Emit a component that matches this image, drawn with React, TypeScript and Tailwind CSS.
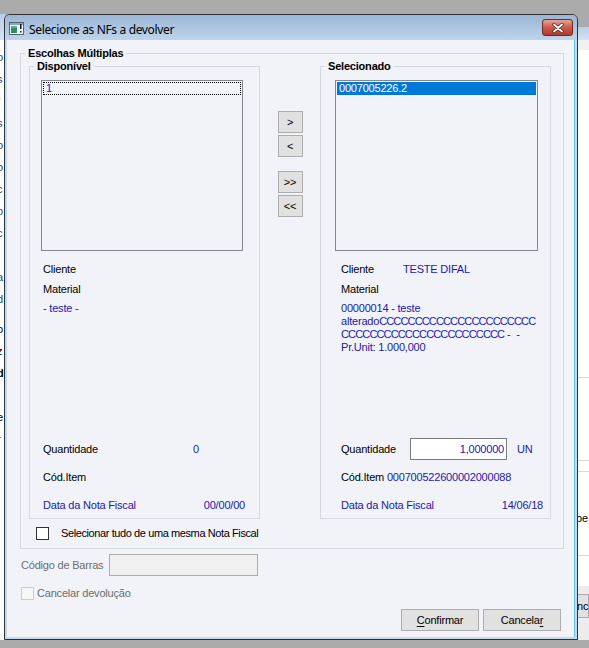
import React from 'react'

const leftGlyphs = ['o', 's', 'f', 's', 'o', 'o', 'c', 'o', 'c', 'l', 'a', 'd']
const leftGlyphs2 = ['o', 'z', 'd', '', 'e', 'r']

function WinIcon() {
  return (
    <svg width="15" height="13" viewBox="0 0 15 13">
      <rect x="0.5" y="0.5" width="14" height="12" fill="#f4f6f8" stroke="#5a6470" />
      <rect x="1" y="1" width="13" height="2" fill="#8aa6c6" />
      <rect x="2" y="4" width="6" height="7" fill="#2f8a6c" />
      <rect x="2" y="4" width="6" height="2" fill="#5fb08f" />
      <rect x="11" y="2" width="1.5" height="5" fill="#111" />
      <rect x="11" y="9" width="1.5" height="1.5" fill="#111" />
    </svg>
  )
}

function CloseButton() {
  return (
    <div className="flex h-[17px] w-[31px] items-center justify-center rounded-[3px] border border-[#6e2b22] bg-linear-to-b from-[#e6a596] via-[#cc5a4b] to-[#b2392b]">
      <svg width="12" height="10" viewBox="0 0 12 10">
        <path d="M2 1.5 L10 8.5 M10 1.5 L2 8.5" stroke="#4b2a26" strokeWidth="3.4" strokeLinecap="round" />
        <path d="M2 1.5 L10 8.5 M10 1.5 L2 8.5" stroke="#ffffff" strokeWidth="1.8" strokeLinecap="round" />
      </svg>
    </div>
  )
}

function MoveButton({ label }: { label: string }) {
  return (
    <button className="flex h-[22px] w-[25px] items-center justify-center border border-[#adadad] bg-[#e1e1e1] text-[11px] leading-none text-black">
      {label}
    </button>
  )
}

export default function App() {
  return (
    <div className="relative h-[648px] w-[589px] overflow-hidden bg-[#ababab] font-['Liberation_Sans',Arial,sans-serif] text-[11px] leading-[13px] tracking-[-0.2px] text-black">
      {/* janela da aplicação por trás, à esquerda */}
      <div className="absolute left-0 top-[14px] h-[626px] w-[5px] overflow-hidden bg-white">
        <div className="h-[26px] bg-linear-to-b from-[#b9cfe8] to-[#d3e2f2]" />
        <div className="-ml-[3px] flex flex-col pt-[6px] leading-[22px] text-[#1f3f8f]">
          {leftGlyphs.map((g, i) => (
            <span key={i}>{g}</span>
          ))}
        </div>
        <div className="-ml-[3px] mt-[8px] flex flex-col leading-[22px] text-black">
          {leftGlyphs2.map((g, i) => (
            <span key={i} className={g === 'd' ? 'font-bold' : ''}>
              {g || '\u00a0'}
            </span>
          ))}
        </div>
      </div>

      {/* janela da aplicação por trás, à direita */}
      <div className="absolute left-[578px] top-[27px] flex h-[613px] w-[11px] flex-col overflow-hidden bg-white">
        <div className="h-[13px] bg-linear-to-b from-[#b9cfe8] to-[#d3e2f2]" />
        <div className="h-[10px] bg-[#f0f0f0]" />
        <div className="h-[328px] border-b border-[#d9d9d9]" />
        <div className="h-[83px] border-b border-[#d9d9d9]" />
        <div className="h-[11px] border-b border-[#d9d9d9]" />
        <div className="h-[38px]" />
        <div className="-ml-[2px] h-[16px] leading-[16px]">pe</div>
        <div className="h-[30px] border-b border-[#d9d9d9]" />
        <div className="h-[30px]" />
        <div className="flex flex-1 flex-col bg-[#ececec] pt-[8px]">
          <div className="-ml-[6px] h-[24px] border border-[#adadad] bg-[#e1e1e1] pl-[4px] leading-[22px]">nc</div>
        </div>
      </div>

      {/* diálogo */}
      <div className="absolute left-[4px] top-[14px] flex h-[626px] w-[574px] flex-col rounded-t-[6px] border border-[#2f3338] bg-[#c5d9ee]">
        <div className="flex h-[25px] items-start rounded-t-[5px] bg-linear-to-b from-[#9bb6d6] to-[#bfd4eb] pl-[4px] pr-[4px]">
          <div className="mt-[7px] flex items-center">
            <WinIcon />
          </div>
          <span className="ml-[5px] mt-[7px] font-['Noto_Sans',sans-serif] text-[12px] leading-[16px] tracking-[-0.35px] text-black">
            Selecione as NFs a devolver
          </span>
          <div className="ml-auto mt-[4px]">
            <CloseButton />
          </div>
        </div>

        <div className="flex flex-1 px-[2px] pb-[2px]">
          <div className="flex flex-1 flex-col border-r border-[#5ec3ea] bg-[#f1f3f8] pt-[7px]">
            <fieldset className="ml-[13px] w-[544px] border border-[#d5d9df]">
              <legend className="ml-[4px] px-[3px] font-bold leading-[13px]">Escolhas Múltiplas</legend>
              <div className="flex pl-[8px]">
                {/* Disponível */}
                <fieldset className="w-[231px] border border-[#d5d9df]">
                  <legend className="ml-[4px] px-[3px] font-bold leading-[13px]">Disponível</legend>
                  <div className="flex h-[445px] flex-col pl-[11px]">
                    <div className="mt-[7px] h-[171px] w-[202px] border border-[#828790] bg-[#f1f3f8] p-[1px]">
                      <div className="h-[13px] border border-dotted border-black pl-[2px] leading-[11px] text-[#2020b0]">1</div>
                    </div>
                    <div className="flex flex-col pl-[2px]">
                      <div className="mt-[8px] flex h-[20px] items-center">Cliente</div>
                      <div className="flex h-[20px] items-center">Material</div>
                      <div className="pt-[3px] leading-[13px] text-[#2020b0]">- teste -</div>
                    </div>
                    <div className="mt-auto flex flex-col gap-[6px] pb-[2px] pl-[2px]">
                      <div className="flex h-[22px] items-center">
                        <span className="w-[150px]">Quantidade</span>
                        <span className="text-[#2020b0]">0</span>
                      </div>
                      <div className="flex h-[22px] items-center">Cód.Item</div>
                      <div className="flex h-[22px] w-[202px] items-center justify-between text-[#2020b0]">
                        <span>Data da Nota Fiscal</span>
                        <span>00/00/00</span>
                      </div>
                    </div>
                  </div>
                </fieldset>

                {/* botões de transferência */}
                <div className="flex w-[60px] flex-col items-center pt-[51px]">
                  <div className="flex flex-col gap-[2px]">
                    <MoveButton label=">" />
                    <MoveButton label="<" />
                  </div>
                  <div className="mt-[14px] flex flex-col gap-[2px]">
                    <MoveButton label=">>" />
                    <MoveButton label="<<" />
                  </div>
                </div>

                {/* Selecionado */}
                <fieldset className="w-[231px] border border-[#d5d9df]">
                  <legend className="ml-[4px] px-[3px] font-bold leading-[13px]">Selecionado</legend>
                  <div className="flex h-[445px] flex-col pl-[14px]">
                    <div className="mt-[7px] h-[171px] w-[203px] border border-[#828790] bg-[#f1f3f8] p-[1px]">
                      <div className="h-[13px] bg-[#0078d7] pl-[2px] leading-[13px] text-white">0007005226.2</div>
                    </div>
                    <div className="flex flex-col pl-[6px]">
                      <div className="mt-[8px] flex h-[20px] items-center">
                        <span className="w-[62px]">Cliente</span>
                        <span className="text-[#2020b0]">TESTE DIFAL</span>
                      </div>
                      <div className="flex h-[20px] items-center">Material</div>
                      <div className="whitespace-nowrap pt-[3px] leading-[13px] text-[#2020b0]">
                        00000014 - teste
                        <br />
                        alterado<span className="tracking-[-0.85px]">CCCCCCCCCCCCCCCCCCCCCC</span>
                        <br />
                        <span className="tracking-[-0.85px]">CCCCCCCCCCCCCCCCCCCCCCC</span> - &nbsp;-
                        <br />
                        Pr.Unit: 1.000,000
                      </div>
                    </div>
                    <div className="mt-auto flex flex-col gap-[6px] pb-[2px] pl-[6px]">
                      <div className="flex h-[22px] items-center">
                        <span className="w-[69px]">Quantidade</span>
                        <div className="flex h-[22px] w-[97px] items-center justify-end border border-[#7a7a7a] bg-white pr-[2px] text-[#2020b0]">
                          1,000000
                        </div>
                        <span className="ml-[10px] text-[#2020b0]">UN</span>
                      </div>
                      <div className="flex h-[22px] items-center">
                        Cód.Item&nbsp;<span className="text-[#2020b0]">000700522600002000088</span>
                      </div>
                      <div className="flex h-[22px] w-[202px] items-center justify-between text-[#2020b0]">
                        <span>Data da Nota Fiscal</span>
                        <span>14/06/18</span>
                      </div>
                    </div>
                  </div>
                </fieldset>
              </div>

              <div className="mb-[8px] ml-[15px] mt-[8px] flex h-[13px] items-center">
                <span className="h-[13px] w-[13px] border border-[#333333] bg-white" />
                <span className="ml-[12px] tracking-[-0.4px]">Selecionar tudo de uma mesma Nota Fiscal</span>
              </div>
            </fieldset>

            <div className="ml-[14px] mt-[5px] flex h-[22px] items-center text-[#6d6d6d]">
              <span className="w-[88px]">Código de Barras</span>
              <div className="h-[22px] w-[149px] border border-[#adadad] bg-[#f0f0f0]" />
            </div>

            <div className="ml-[14px] mt-[11px] flex h-[13px] items-center text-[#6d6d6d]">
              <span className="h-[13px] w-[13px] border border-[#cccccc] bg-[#f7f7f7]" />
              <span className="ml-[3px]">Cancelar devolução</span>
            </div>

            <div className="mt-[9px] flex justify-end gap-[4px] pr-[13px]">
              <button className="flex h-[22px] w-[78px] items-center justify-center border border-[#adadad] bg-[#e1e1e1] text-[11px]">
                <span className="underline underline-offset-2">C</span>onfirmar
              </button>
              <button className="flex h-[22px] w-[78px] items-center justify-center border border-[#adadad] bg-[#e1e1e1] text-[11px]">
                Cancela<span className="underline underline-offset-2">r</span>
              </button>
            </div>
          </div>
        </div>
      </div>
    </div>
  )
}
